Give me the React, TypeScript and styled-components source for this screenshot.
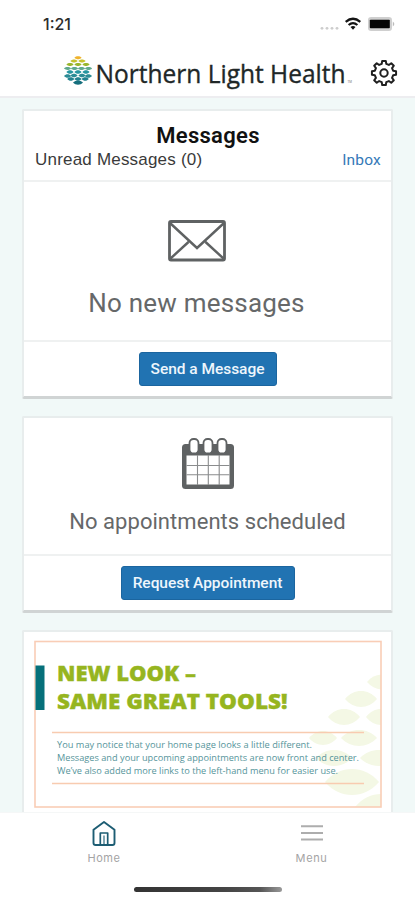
import React from "react";
import styled, { createGlobalStyle } from "styled-components";

const GlobalStyle = createGlobalStyle`
  * { box-sizing: border-box; }
  body { margin: 0; background: #fff; font-family: Roboto, "Liberation Sans", sans-serif; }
  svg { display: block; flex: none; }
`;

const Screen = styled.div`
  width: 415px;
  height: 900px;
  display: flex;
  flex-direction: column;
  overflow: hidden;
  background: #fff;
`;

const StatusBar = styled.div`
  height: 46px;
  padding: 1px 20px 0 43px;
  display: flex;
  align-items: center;
  justify-content: space-between;
`;

const Clock = styled.span`
  font: 500 16px/20px Inter, sans-serif;
  color: #2c2c2c;
`;

const Header = styled.header`
  height: 52px;
  padding: 5px 17px 0 64px;
  display: flex;
  align-items: flex-start;
  justify-content: space-between;
  border-bottom: 2px solid #ededf0;
`;

const SettingsButton = styled.a`
  padding-top: 8px;
`;

const Feed = styled.main`
  flex: 1;
  min-height: 0;
  overflow: hidden;
  display: flex;
  flex-direction: column;
  gap: 17px;
  padding: 11px 22px 0;
  background: #f1f9f8;
`;

const Card = styled.section<{ $height: number }>`
  flex: none;
  height: ${(p) => p.$height}px;
  display: flex;
  flex-direction: column;
  background: #fff;
  border: 2px solid #e8eded;
  border-bottom: 3px solid #d0d4d4;
  border-radius: 2px;
`;

const CardHead = styled.div`
  height: 71px;
  padding: 12px 10px 0 11px;
  border-bottom: 2px solid #eff1f1;
`;

const Title = styled.h1`
  margin: 0;
  font-size: 22px;
  line-height: 25px;
  font-weight: 600;
  letter-spacing: 0.3px;
  text-align: center;
  color: #111;
`;

const Summary = styled.div`
  display: flex;
  justify-content: space-between;
  line-height: 24px;
  font-family: "Liberation Sans", sans-serif;
  font-size: 17px;
  letter-spacing: 0.2px;
  color: #3a3a3a;
`;

const InboxLink = styled.a`
  font-family: Roboto, sans-serif;
  font-size: 15.5px;
  letter-spacing: 0.2px;
  color: #3579b8;
`;

const Empty = styled.div<{ $top: number; $gap: number; $size: number; $spacing: number; $shift?: number }>`
  flex: 1;
  padding-top: ${(p) => p.$top}px;
  padding-right: ${(p) => p.$shift ?? 0}px;
  display: flex;
  flex-direction: column;
  align-items: center;
  gap: ${(p) => p.$gap}px;
  font-size: ${(p) => p.$size}px;
  line-height: 32px;
  letter-spacing: ${(p) => p.$spacing}px;
  color: #666869;
`;

const Actions = styled.div`
  height: 56px;
  display: flex;
  justify-content: center;
  align-items: flex-start;
  padding-top: 10px;
  border-top: 2px solid #eff1f1;
`;

const Button = styled.button<{ $width: number }>`
  width: ${(p) => p.$width}px;
  height: 34px;
  padding: 0 0 1px;
  border: 1px solid #1b659f;
  border-radius: 3px;
  background: #2173b2;
  color: #eef6fc;
  font: 500 15.5px/20px Roboto, sans-serif;
  letter-spacing: -0.04px;
  white-space: nowrap;
`;

const BannerFrame = styled.div`
  padding: 8px 0 0 10px;
`;

const TabBar = styled.nav`
  height: 70px;
  display: grid;
  grid-template-columns: 208px 207px;
  background: #fff;
  border-top: 1px solid #f5f7f7;
`;

const Tab = styled.div`
  display: flex;
  flex-direction: column;
  align-items: center;
  gap: 3px;
  padding-top: 7px;
  font: 400 11px/16px Inter, sans-serif;
  letter-spacing: 0.6px;
  color: #a4a4a4;
`;

const HomeArea = styled.div`
  height: 18px;
  padding-top: 5px;
  display: flex;
  justify-content: center;
`;

const HomeIndicator = styled.div`
  width: 148px;
  height: 4.5px;
  border-radius: 3px;
  background: linear-gradient(90deg, #333 0%, #444 60%, #555 85%, #999 100%);
`;

const StatusIcons = () => (
  <svg width="76" height="18" viewBox="319 14 76 18">
    {[322, 327, 332, 337].map((x) => (
      <circle key={x} cx={x} cy="27.3" r="1.4" fill="#cdcdcd" />
    ))}
    <g fill="none" stroke="#151515" strokeWidth="2.2">
      <path d="M345.7 20.8Q353 14.7 360.3 20.8" />
      <path d="M348.6 24Q353 20.2 357.4 24" />
    </g>
    <path d="M353 28.8l-2.5-2.7q2.5-2 5 0z" fill="#111" />
    <rect x="368" y="16" width="24" height="14" rx="3.2" fill="#cfcfcf" />
    <rect x="369.8" y="18.7" width="20" height="8.6" rx="0.8" fill="#050505" />
    <path d="M392.8 20.5q3 2.5 0 5z" fill="#bbb" />
  </svg>
);

const leaf = (cx: number, cy: number, w: number, h: number) => {
  const k = h * 1.33;
  return (
    `M${cx - w} ${cy}C${cx - w * 0.45} ${cy - k} ${cx + w * 0.45} ${cy - k} ${cx + w} ${cy}` +
    `C${cx + w * 0.45} ${cy + k} ${cx - w * 0.45} ${cy + k} ${cx - w} ${cy}Z`
  );
};

const logoRows: [number, number[], string][] = [
  [57.7, [78], "#f0b32c"],
  [61, [74, 82], "#c6c22e"],
  [64.6, [70, 78, 86], "#9ab62c"],
  [68.4, [67.5, 74.5, 81.5, 88.5], "#5fa98d"],
  [72, [70, 78, 86], "#2695a0"],
  [75.5, [74, 82], "#2a8b95"],
  [76, [67.6, 88.4], "#2a8b95"],
  [79, [70.8, 78, 85.2], "#21818f"],
  [82.6, [78], "#166f7d"],
];

const Brand = () => (
  <svg width="290" height="40" viewBox="64 51 290 40">
    {logoRows.map(([y, xs, fill]) =>
      xs.map((x) => (
        <path
          key={`${x}-${y}`}
          d={leaf(x, y, y > 82 ? 5 : 3.6, y > 82 ? 2.2 : y > 70 ? 1.8 : 1.5)}
          fill={fill}
        />
      )),
    )}
    <text
      x="95.5"
      y="83"
      textLength="250"
      lengthAdjust="spacingAndGlyphs"
      fontFamily="Open Sans, sans-serif"
      fontSize="24.8"
      fontWeight="500"
      fill="#202727"
      stroke="#202727"
      strokeWidth="0.35"
    >
      Northern Light Health
    </text>
    <text x="347.5" y="83.3" fontFamily="Roboto, sans-serif" fontSize="3" fill="#777">
      TM
    </text>
  </svg>
);

const gearPath = (() => {
  const points: string[] = [];
  for (let i = 0; i < 8; i++) {
    const base = i * 45;
    const profile: [number, number][] = [
      [-14, 9.4],
      [-8.5, 12.2],
      [8.5, 12.2],
      [14, 9.4],
    ];
    profile.forEach(([offset, r]) => {
      const a = ((base + offset) * Math.PI) / 180;
      points.push(`${(14 + r * Math.sin(a)).toFixed(2)} ${(14 - r * Math.cos(a)).toFixed(2)}`);
    });
  }
  return `M${points.join("L")}Z`;
})();

const Gear = () => (
  <svg width="28" height="28" viewBox="0 0 28 28" fill="none" stroke="#1f1f1f" strokeWidth="2" strokeLinejoin="round">
    <path d={gearPath} />
    <circle cx="14" cy="14" r="3.7" />
  </svg>
);

const Envelope = () => (
  <svg width="58" height="42" viewBox="0 0 58 42" fill="none" stroke="#5f6263" strokeWidth="2.8">
    <rect x="1.5" y="1.5" width="55" height="38.5" rx="1.5" />
    <path d="M2 3L29 28L56 3M2.5 38.5L20.5 22M55.5 38.5L37.5 22" strokeWidth="2.4" />
  </svg>
);

const Calendar = () => (
  <svg width="54" height="52" viewBox="0 0 54 52">
    <rect x="1" y="6" width="52" height="45" rx="3.5" fill="#5f6263" />
    <rect x="5.5" y="17.5" width="43" height="29" fill="#fff" />
    <path d="M16.5 17v30M27.3 17v30M38.2 17v30M5.5 27.5h43M5.5 36.8h43" stroke="#8a8c8d" strokeWidth="1.1" />
    {[8.5, 22.5, 36.5].map((x) => (
      <rect key={x} x={x} y="1" width="9" height="14.5" rx="4" fill="#fff" stroke="#5f6263" strokeWidth="1.8" />
    ))}
  </svg>
);

const leaves: [number, number, number, number][] = [
  [382, 682, 15, 7.5],
  [361, 699, 16, 8],
  [344, 717, 16, 8],
  [381, 717, 15, 8],
  [323, 738, 14, 7],
  [359, 738, 18, 8],
  [334, 758, 18, 8],
  [379, 758, 19, 8],
  [352, 782, 27, 13],
  [381, 807, 26, 13],
];

const notes: [string, number, number][] = [
  ["You may notice that your home page looks a little different.", 747.7, 255],
  ["Messages and your upcoming appointments are now front and center.", 761.3, 302],
  ["We’ve also added more links to the left-hand menu for easier use.", 774.4, 281],
];

const Banner = () => (
  <svg width="348" height="168" viewBox="34 640 348 168">
    <defs>
      <clipPath id="banner-edge">
        <rect x="35" y="641" width="346" height="166" />
      </clipPath>
    </defs>
    <g clipPath="url(#banner-edge)" fill="#f4f8e5">
      {leaves.map(([x, y, w, h]) => (
        <path key={`${x}-${y}`} d={leaf(x, y, w, h)} />
      ))}
    </g>
    <rect x="35" y="641.5" width="346" height="165.5" fill="none" stroke="#f9cdb6" strokeWidth="1.6" />
    <rect x="35.5" y="665.5" width="9" height="44.5" fill="#06707a" />
    <g fontFamily="Open Sans, sans-serif" fontWeight="800" fontSize="21" fill="#96b51f" stroke="#96b51f" strokeWidth="0.4">
      <text x="57" y="681" textLength="139" lengthAdjust="spacingAndGlyphs">
        NEW LOOK –
      </text>
      <text x="57" y="709.3" textLength="230.5" lengthAdjust="spacingAndGlyphs">
        SAME GREAT TOOLS!
      </text>
    </g>
    <path d="M52 732.5H364M52 783.5H364" stroke="#f8cbb0" strokeWidth="1.3" />
    <g fontFamily="Open Sans, sans-serif" fontWeight="400" fontSize="9.6" fill="#56959b">
      {notes.map(([text, y, width]) => (
        <text key={y} x="57" y={y} textLength={width} lengthAdjust="spacingAndGlyphs">
          {text}
        </text>
      ))}
    </g>
  </svg>
);

const HomeIcon = () => (
  <svg width="24" height="27" viewBox="0 0 24 27" fill="none" stroke="#1d5d73" strokeWidth="1.9" strokeLinejoin="round">
    <path d="M1.5 9.8L12 2L22.5 9.8V23Q22.5 25 20.5 25H3.5Q1.5 25 1.5 23Z" />
    <path d="M8.3 24.5V13H15.7V24.5" strokeWidth="1.7" />
    <path d="M12 15.5V24.5" strokeWidth="1.1" />
  </svg>
);

const MenuIcon = () => (
  <svg width="22" height="27" viewBox="0 0 22 27">
    <path d="M0 6.2H22M0 12.9H22M0 19.5H22" stroke="#adadad" strokeWidth="2" />
  </svg>
);

export default function App() {
  return (
    <Screen>
      <GlobalStyle />
      <StatusBar>
        <Clock>1:21</Clock>
        <StatusIcons />
      </StatusBar>
      <Header>
        <Brand />
        <SettingsButton>
          <Gear />
        </SettingsButton>
      </Header>
      <Feed>
        <Card $height={290}>
          <CardHead>
            <Title>Messages</Title>
            <Summary>
              <span>Unread Messages (0)</span>
              <InboxLink>Inbox</InboxLink>
            </Summary>
          </CardHead>
          <Empty $top={38} $gap={25} $size={26} $spacing={0.2} $shift={22}>
            <Envelope />
            <span>No new messages</span>
          </Empty>
          <Actions>
            <Button $width={138}>Send a Message</Button>
          </Actions>
        </Card>
        <Card $height={197}>
          <Empty $top={20} $gap={16} $size={22} $spacing={0.05}>
            <Calendar />
            <span>No appointments scheduled</span>
          </Empty>
          <Actions>
            <Button $width={174}>Request Appointment</Button>
          </Actions>
        </Card>
        <Card $height={200}>
          <BannerFrame>
            <Banner />
          </BannerFrame>
        </Card>
      </Feed>
      <TabBar>
        <Tab>
          <HomeIcon />
          Home
        </Tab>
        <Tab>
          <MenuIcon />
          Menu
        </Tab>
      </TabBar>
      <HomeArea>
        <HomeIndicator />
      </HomeArea>
    </Screen>
  );
}
